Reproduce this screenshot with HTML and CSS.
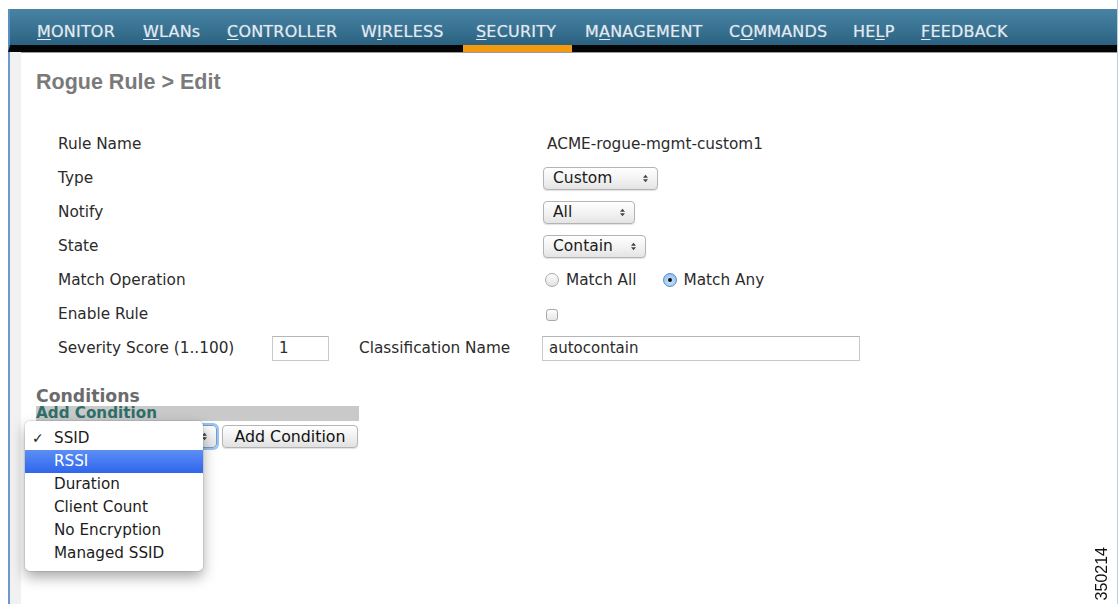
FILE: index.html
```html
<!DOCTYPE html>
<html>
<head>
<meta charset="utf-8">
<title>Rogue Rule &gt; Edit</title>
<link rel="stylesheet" href="styles.css">
</head>
<body>
<div class="frame">
  <nav class="topnav">
    <a class="tab t-monitor"><u>M</u>ONITOR</a>
    <a class="tab t-wlans"><u>W</u>LANs</a>
    <a class="tab t-controller"><u>C</u>ONTROLLER</a>
    <a class="tab t-wireless">W<u>I</u>RELESS</a>
    <a class="tab t-security active"><u>S</u>ECURITY</a>
    <a class="tab t-management">M<u>A</u>NAGEMENT</a>
    <a class="tab t-commands">C<u>O</u>MMANDS</a>
    <a class="tab t-help">HE<u>L</u>P</a>
    <a class="tab t-feedback"><u>F</u>EEDBACK</a>
  </nav>

  <div class="page">
    <h1 class="title">Rogue Rule &gt; Edit</h1>

    <div class="form">
      <div class="lbl">Rule Name</div>
      <div class="val text">ACME-rogue-mgmt-custom1</div>

      <div class="lbl">Type</div>
      <div class="val"><span class="select w-custom">Custom<svg class="updown" viewBox="0 0 6 10"><path d="M0 4 L3 0.5 L6 4 Z M0 6 L3 9.5 L6 6 Z"/></svg></span></div>

      <div class="lbl">Notify</div>
      <div class="val"><span class="select w-all">All<svg class="updown" viewBox="0 0 6 10"><path d="M0 4 L3 0.5 L6 4 Z M0 6 L3 9.5 L6 6 Z"/></svg></span></div>

      <div class="lbl">State</div>
      <div class="val"><span class="select w-contain">Contain<svg class="updown" viewBox="0 0 6 10"><path d="M0 4 L3 0.5 L6 4 Z M0 6 L3 9.5 L6 6 Z"/></svg></span></div>

      <div class="lbl">Match Operation</div>
      <div class="val radios">
        <span class="radio"></span><span class="rtext">Match All</span>
        <span class="radio on"></span><span class="rtext">Match Any</span>
      </div>

      <div class="lbl">Enable Rule</div>
      <div class="val"><span class="checkbox"></span></div>

      <div class="lbl-short">Severity Score (1..100)</div>
      <div class="cell"><span class="input w-score">1</span></div>
      <div class="cell">Classification Name</div>
      <div class="cell"><span class="input w-class">autocontain</span></div>
    </div>

    <h2 class="cond-title">Conditions</h2>
    <div class="cond-bar">Add Condition</div>
    <div class="cond-row">
      <div class="cond-select">
        <span class="select focus w-cond"><span class="covered">SSID</span><svg class="updown" viewBox="0 0 6 10"><path d="M0 4 L3 0.5 L6 4 Z M0 6 L3 9.5 L6 6 Z"/></svg></span>
        <ul class="menu">
          <li class="checked"><span class="tick">✓</span>SSID</li>
          <li class="hl">RSSI</li>
          <li>Duration</li>
          <li>Client Count</li>
          <li>No Encryption</li>
          <li>Managed SSID</li>
        </ul>
      </div>
      <span class="button">Add Condition</span>
    </div>
  </div>

  <div class="figno">350214</div>
</div>
</body>
</html>
```

FILE: styles.css
```css
html, body {
  margin: 0;
  padding: 0;
  background: #fff;
}

body {
  font-family: "DejaVu Sans", Verdana, sans-serif;
  font-size: 15.3px;
  color: #2b2b2b;
}

.frame {
  position: relative;
  height: 604px;
  box-sizing: border-box;
  margin-left: 8px;
  width: 1110px;
  padding-top: 9px;
  border-right: 1px solid #b9cde6;
  overflow: hidden;
}

/* ---- top navigation ---- */
.topnav {
  display: flex;
  height: 36px;
  padding-left: 14px;
  background: linear-gradient(#4883a3, #3a7494 50%, #2b6180);
  border-left: 2px solid #5c8fbf;
  border-bottom: 7px solid #050505;
  box-shadow: 0 1px 0 #9a9a9a;
}

.tab {
  display: flex;
  align-items: center;
  flex: none;
  padding: 8px 0 0 13px;
  margin-bottom: -7px;
  border-bottom: 7px solid transparent;
  box-sizing: border-box;
  height: 43px;
  font-size: 16px;
  color: #e2eaf0;
  text-shadow: 0 0 1px rgba(255,255,255,.45);
  letter-spacing: 0.2px;
  white-space: nowrap;
}

.tab u {
  text-decoration-thickness: 1px;
  text-underline-offset: 2px;
}

.tab.active { border-bottom-color: #f39a10; }

.t-monitor    { width: 106px; }
.t-wlans      { width: 84px; }
.t-controller { width: 134px; }
.t-wireless   { width: 115px; }
.t-security   { width: 109px; }
.t-management { width: 144px; }
.t-commands   { width: 124px; }
.t-help       { width: 68px; }
.t-feedback   { width: 120px; }

/* ---- page body ---- */
.page {
  height: 560px;
  border-left: 2px solid #6f97cc;
  box-shadow: inset 11px 0 0 #f1f1f1;
  padding: 1px 0 0 26px;
}

.title {
  margin: 16px 0 0 0;
  font-family: "Liberation Sans", Arial, sans-serif;
  font-size: 21.5px;
  font-weight: bold;
  line-height: 26px;
  color: #7a7a7a;
}

/* ---- rule form ---- */
.form {
  display: grid;
  grid-template-columns: 214px 87px 184px 1fr;
  grid-auto-rows: 34px;
  margin: 32px 0 0 22px;
  align-items: center;
}

.lbl { grid-column: 1 / 4; }
.val { grid-column: 4; }
.val.text { padding-left: 4px; }

.select {
  display: inline-flex;
  align-items: center;
  box-sizing: border-box;
  height: 23px;
  padding-left: 9px;
  font-size: 15.5px;
  color: #1a1a1a;
  background: linear-gradient(#ffffff, #f3f3f3 50%, #e4e4e4);
  border: 1px solid #b4b4b4;
  border-radius: 4px;
  box-shadow: 0 1px 1px rgba(0,0,0,.12);
  position: relative;
}

.updown {
  position: absolute;
  right: 9px;
  top: 6px;
  width: 5px;
  height: 9px;
  fill: #444;
}

.w-custom  { width: 115px; }
.w-all     { width: 92px; }
.w-contain { width: 103px; }

.radios {
  display: flex;
  align-items: center;
}

.radio {
  width: 14px;
  height: 14px;
  box-sizing: border-box;
  border-radius: 50%;
  border: 1px solid #a9a9a9;
  background: linear-gradient(#fdfdfd, #e2e2e2);
  margin: 0 7px 0 0;
  position: relative;
}

.radios .radio:first-child { margin-left: 2px; }

.radio.on {
  border-color: #5a8cc8;
  background: radial-gradient(circle at 50% 60%, #cfe6fb, #7eb6ee);
}

.radio.on::after {
  content: "";
  position: absolute;
  left: 4px;
  top: 4px;
  width: 4px;
  height: 4px;
  border-radius: 50%;
  background: #111;
}

.rtext { margin-right: 26px; }

.checkbox {
  display: inline-block;
  width: 12px;
  height: 12px;
  box-sizing: border-box;
  margin-left: 3px;
  border: 1px solid #a9a9a9;
  border-radius: 3px;
  background: linear-gradient(#fdfdfd, #e6e6e6);
  vertical-align: middle;
}

.lbl-short { grid-column: 1; white-space: nowrap; }
.cell { display: flex; align-items: center; white-space: nowrap; }

.input {
  display: inline-flex;
  align-items: center;
  box-sizing: border-box;
  height: 25px;
  padding-left: 6px;
  border: 1px solid #c9c9c9;
  border-top-color: #b5b5b5;
  background: #fff;
  font-size: 15px;
}

.w-score { width: 57px; }
.w-class { width: 318px; margin-left: -1px; }

/* ---- conditions ---- */
.cond-title {
  margin: 21px 0 0 0;
  font-size: 17.3px;
  font-weight: bold;
  line-height: 20px;
  color: #6b6b6b;
}

.cond-bar {
  width: 323px;
  height: 15px;
  line-height: 14px;
  background: #c9c9c9;
  color: #2f6f6a;
  font-size: 15.2px;
  font-weight: bold;
  white-space: nowrap;
}

.cond-row {
  display: flex;
  align-items: center;
  margin-top: 4px;
  gap: 5px;
}

.cond-select { position: relative; }

.covered { visibility: hidden; }

.select.focus {
  border-color: #6e9fd6;
  box-shadow: 0 0 0 2px #9cc3ee;
}

.w-cond { width: 181px; }

.button {
  display: inline-flex;
  align-items: center;
  justify-content: center;
  box-sizing: border-box;
  width: 136px;
  height: 23px;
  font-size: 15.8px;
  color: #111;
  background: linear-gradient(#ffffff, #f1f1f1 50%, #e1e1e1);
  border: 1px solid #b4b4b4;
  border-radius: 4px;
  box-shadow: 0 1px 1px rgba(0,0,0,.12);
}

/* open popup menu of the condition select */
.menu {
  position: absolute;
  left: -11px;
  top: -4px;
  width: 178px;
  margin: 0;
  padding: 6px 0 6px;
  list-style: none;
  background: #fff;
  border-radius: 5px;
  box-shadow: 0 6px 14px rgba(0,0,0,.35), 0 0 0 1px rgba(0,0,0,.08);
  z-index: 2;
}

.menu li {
  position: relative;
  height: 23px;
  line-height: 23px;
  padding-left: 29px;
  font-size: 15.2px;
  color: #1c1c1c;
  white-space: nowrap;
}

.menu li.hl {
  color: #fff;
  background: linear-gradient(#5c8ef5, #2f66ec);
}

.tick {
  position: absolute;
  left: 7px;
  top: 0;
  font-size: 14px;
  font-weight: bold;
}

.figno {
  position: absolute;
  right: 9px;
  bottom: 4px;
  writing-mode: vertical-rl;
  transform: rotate(180deg);
  font-family: "Liberation Sans", Arial, sans-serif;
  font-size: 16px;
  line-height: 13px;
  color: #111;
}
```
